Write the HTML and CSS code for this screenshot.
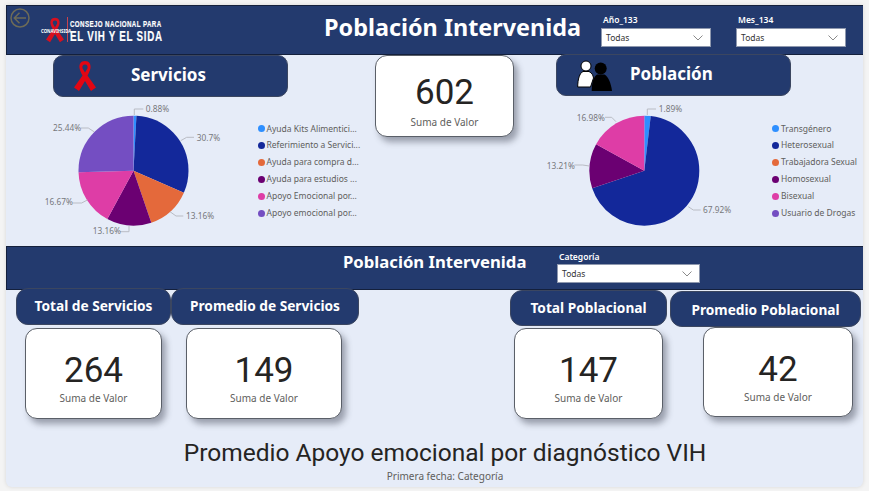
FILE: index.html
```html
<!DOCTYPE html>
<html>
<head>
  <meta charset="utf-8">
  <link rel="stylesheet" href="styles.css">
</head>
<body>
  <div class="canvas">
    <div class="topbar">
      <svg class="back" width="20" height="20" viewBox="0 0 20 20" fill="none" stroke="#6d6b57" stroke-width="1.500">
        <circle cx="10" cy="10" r="9"/>
        <path d="M16 10H4.500M9.500 4.800 4.300 10l5.200 5.200"/>
      </svg>
      <div class="logo">
        <svg width="18" height="26" viewBox="0 0 22 30">
          <path d="M11 0C6.500 0 5 3.500 5.500 7c.4 2.800 2 5.500 3 7.500L0 26.500 5 30l6-10 6 10 5-3.500-8.500-12c1-2 2.600-4.700 3-7.500C17 3.500 15.500 0 11 0zm0 3.500c2 0 3 1.500 2.500 3.800L11 11.500 8.500 7.300C8 5 9 3.500 11 3.500z" fill="#d8101f"/>
        </svg>
        <span class="logo-tag">CONAVIHSIDA</span>
        <div class="logo-name">
          <div class="logo-small">CONSEJO NACIONAL PARA</div>
          <div class="logo-big">EL VIH Y EL SIDA</div>
        </div>
      </div>
      <div class="main-title">Población Intervenida</div>
      <div class="slicer slicer-year">
        <div class="slicer-label">Año_133</div>
        <div class="dropdown">Todas
          <svg width="10" height="6" viewBox="0 0 10 6" fill="none" stroke="#8a8a8a"><path d="M.5.500l4.500 4.500L9.500.500"/></svg>
        </div>
      </div>
      <div class="slicer slicer-month">
        <div class="slicer-label">Mes_134</div>
        <div class="dropdown">Todas
          <svg width="10" height="6" viewBox="0 0 10 6" fill="none" stroke="#8a8a8a"><path d="M.5.500l4.500 4.500L9.500.500"/></svg>
        </div>
      </div>
    </div>

    <div class="charts">
      <div class="panel panel-services">
        <div class="pill pill-head">
          <svg width="22" height="30" viewBox="0 0 22 30">
            <path d="M11 0C6.500 0 5 3.500 5.500 7c.4 2.800 2 5.500 3 7.500L0 26.500 5 30l6-10 6 10 5-3.500-8.500-12c1-2 2.600-4.700 3-7.500C17 3.500 15.500 0 11 0zm0 3.500c2 0 3 1.500 2.500 3.800L11 11.500 8.500 7.300C8 5 9 3.500 11 3.500z" fill="#e30613"/>
          </svg>
          <span>Servicios</span>
        </div>
        <div class="chart-row">
          <svg class="pie" width="226" height="132" viewBox="0 0 226 132">
            <g transform="translate(103.500 55.700) rotate(-90)" fill="none" stroke-width="55">
              <circle r="27.500" pathLength="100" stroke="#2e8fff" stroke-dasharray="0.88 99.120"/>
              <circle r="27.500" pathLength="100" stroke="#13289a" stroke-dasharray="30.700 69.300" stroke-dashoffset="-0.88"/>
              <circle r="27.500" pathLength="100" stroke="#e4693b" stroke-dasharray="13.160 86.840" stroke-dashoffset="-31.580"/>
              <circle r="27.500" pathLength="100" stroke="#6b0072" stroke-dasharray="13.160 86.840" stroke-dashoffset="-44.740"/>
              <circle r="27.500" pathLength="100" stroke="#de3da6" stroke-dasharray="16.670 83.330" stroke-dashoffset="-57.900"/>
              <circle r="27.500" pathLength="100" stroke="#744ec2" stroke-dasharray="25.430 74.570" stroke-dashoffset="-74.570"/>
            </g>
            <g class="leaders">
              <polyline points="104.300,0 104.300,-6 113.300,-6"/>
              <polyline points="150.700,25.700 156.700,22.300 164,22.300"/>
              <polyline points="140,96.700 146,101 153.300,101"/>
              <polyline points="90,116.700 99,116.700 99,111"/>
              <polyline points="42.700,88 51.700,88 57.300,85"/>
              <polyline points="51,13 58.300,13 64,16.700"/>
            </g>
            <text class="pie-label" x="115.700" y="-3">0.88%</text>
            <text class="pie-label" x="166.700" y="25.700">30.7%</text>
            <text class="pie-label" x="156" y="103.700">13.16%</text>
            <text class="pie-label" x="62.700" y="119.300">13.16%</text>
            <text class="pie-label" x="14.700" y="90.300">16.67%</text>
            <text class="pie-label" x="23" y="15.700">25.44%</text>
          </svg>
          <ul class="legend">
            <li><i style="background:#2e8fff"></i>Ayuda Kits Alimentici...</li>
            <li><i style="background:#13289a"></i>Referimiento a Servici...</li>
            <li><i style="background:#e4693b"></i>Ayuda para compra d...</li>
            <li><i style="background:#6b0072"></i>Ayuda para estudios ...</li>
            <li><i style="background:#de3da6"></i>Apoyo Emocional por...</li>
            <li><i style="background:#744ec2"></i>Apoyo emocional por...</li>
          </ul>
        </div>
      </div>

      <div class="card card-center">
        <div class="card-value">602</div>
        <div class="card-label">Suma de Valor</div>
      </div>

      <div class="panel panel-people">
        <div class="pill pill-head pill-people">
          <svg width="36" height="31" viewBox="0 0 36 31">
            <circle cx="9" cy="6" r="5" fill="#fff" stroke="#000"/>
            <path d="M.7 27c0-8 2-14 5.300-15.500h6C15 13 16 15 16.500 18l-3 9z" fill="#fff" stroke="#000"/>
            <circle cx="23.700" cy="8.500" r="6"/>
            <path d="M14.700 31c0-9 2-14 5.300-16.500h7.500C31.500 17 34 23 35 31z"/>
          </svg>
          <span>Población</span>
        </div>
        <div class="chart-row">
          <svg class="pie" width="216" height="132" viewBox="0 0 216 132">
            <g transform="translate(88.300 56.700) rotate(-90)" fill="none" stroke-width="55">
              <circle r="27.500" pathLength="100" stroke="#2e8fff" stroke-dasharray="1.890 98.110"/>
              <circle r="27.500" pathLength="100" stroke="#13289a" stroke-dasharray="67.920 32.080" stroke-dashoffset="-1.890"/>
              <circle r="27.500" pathLength="100" stroke="#6b0072" stroke-dasharray="13.210 86.790" stroke-dashoffset="-69.810"/>
              <circle r="27.500" pathLength="100" stroke="#de3da6" stroke-dasharray="16.980 83.020" stroke-dashoffset="-83.020"/>
            </g>
            <g class="leaders">
              <polyline points="91.300,1 91.300,-5 100,-5"/>
              <polyline points="132.300,92.700 137.300,96 144.700,96"/>
              <polyline points="18.300,51 26.700,51 33.300,52"/>
              <polyline points="49,3.300 55.700,3.300 60,7.700"/>
            </g>
            <text class="pie-label" x="102.700" y="-1.700">1.89%</text>
            <text class="pie-label" x="147" y="99">67.92%</text>
            <text class="pie-label" x="-9.300" y="55">13.21%</text>
            <text class="pie-label" x="20.700" y="7">16.98%</text>
          </svg>
          <ul class="legend">
            <li><i style="background:#2e8fff"></i>Transgénero</li>
            <li><i style="background:#13289a"></i>Heterosexual</li>
            <li><i style="background:#e4693b"></i>Trabajadora Sexual</li>
            <li><i style="background:#6b0072"></i>Homosexual</li>
            <li><i style="background:#de3da6"></i>Bisexual</li>
            <li><i style="background:#744ec2"></i>Usuario de Drogas</li>
          </ul>
        </div>
      </div>
    </div>

    <div class="band">
      <div class="band-title">Población Intervenida</div>
      <div class="slicer slicer-cat">
        <div class="slicer-label">Categoría</div>
        <div class="dropdown">Todas
          <svg width="10" height="6" viewBox="0 0 10 6" fill="none" stroke="#8a8a8a"><path d="M.5.500l4.500 4.500L9.500.500"/></svg>
        </div>
      </div>
    </div>

    <div class="kpis">
      <div class="kpi kpi-total-s">
        <div class="pill pill-kpi">Total de Servicios</div>
        <div class="card">
          <div class="card-value">264</div>
          <div class="card-label">Suma de Valor</div>
        </div>
      </div>
      <div class="kpi kpi-avg-s">
        <div class="pill pill-kpi">Promedio de Servicios</div>
        <div class="card">
          <div class="card-value">149</div>
          <div class="card-label">Suma de Valor</div>
        </div>
      </div>
      <div class="kpi kpi-total-p">
        <div class="pill pill-kpi">Total Poblacional</div>
        <div class="card">
          <div class="card-value">147</div>
          <div class="card-label">Suma de Valor</div>
        </div>
      </div>
      <div class="kpi kpi-avg-p">
        <div class="pill pill-kpi">Promedio Poblacional</div>
        <div class="card">
          <div class="card-value">42</div>
          <div class="card-label">Suma de Valor</div>
        </div>
      </div>
    </div>

    <div class="footer-title">Promedio Apoyo emocional por diagnóstico VIH</div>
    <div class="footer-sub">Primera fecha: Categoría</div>
  </div>
</body>
</html>
```

FILE: styles.css
```css
html, body {
  margin: 0;
  height: 100%;
}

body {
  background: #f4f4f4;
  font-family: "Noto Sans", "Open Sans", sans-serif;
  overflow: hidden;
}

.canvas {
  width: 857px;
  height: 482px;
  margin: 5px 0 0 6px;
  background: #e6ecf8;
  border-radius: 0 0 6px 6px;
  box-shadow: 0 0 4px rgba(0, 0, 0, 0.12);
  display: flex;
  flex-direction: column;
}

/* top header */
.topbar {
  height: 48px;
  flex: none;
  background: #233a6e;
  border: 1px solid #14203c;
  border-width: 1px 0 1px 1px;
  display: flex;
  align-items: flex-start;
  color: #fff;
}

.back {
  margin: 2px 0 0 3px;
  flex: none;
}

.logo {
  flex: none;
  display: flex;
  align-items: flex-start;
  margin: 11px 0 0 16px;
  position: relative;
}

.logo svg {
  flex: none;
  margin-right: 3px;
}

.logo-tag {
  position: absolute;
  left: -5px;
  top: 11px;
  font-size: 4.300px;
  line-height: 6px;
  font-weight: 700;
  color: #fff;
  white-space: nowrap;
}

.logo-name {
  width: 93px;
  height: 24px;
  padding: 1px 0 0 2px;
  box-sizing: content-box;
  border-left: 1px solid #c9434e;
  font-family: "Liberation Sans", sans-serif;
  font-weight: 700;
  white-space: nowrap;
  -webkit-text-stroke: 0.2px #fff;
}

.logo-small {
  font-size: 9.700px;
  line-height: 11px;
  letter-spacing: 0.6px;
  transform: scaleX(0.64);
  transform-origin: left center;
}

.logo-big {
  font-size: 15.300px;
  line-height: 14px;
  letter-spacing: 1.100px;
  transform: scaleX(0.64);
  transform-origin: left center;
}

.main-title {
  flex: none;
  margin: 4px 0 0 161px;
  width: 277px;
  font-size: 23.400px;
  line-height: 34px;
  font-weight: 700;
  white-space: nowrap;
}

.slicer {
  flex: none;
  color: #fff;
}

.slicer-year {
  margin: 7px 0 0 0;
  width: 110px;
}

.slicer-month {
  margin: 7px 0 0 25px;
  width: 110px;
}

.slicer-label {
  font-size: 8.500px;
  line-height: 13px;
  font-weight: 600;
  padding-left: 2px;
}

.dropdown {
  margin-top: 2px;
  height: 19px;
  box-sizing: border-box;
  background: #fff;
  border: 1px solid #8e98ae;
  color: #333;
  font-size: 8.500px;
  line-height: 17px;
  padding: 0 7px 0 4px;
  display: flex;
  align-items: center;
  justify-content: space-between;
}

/* pie section */
.charts {
  height: 191px;
  flex: none;
  display: flex;
  align-items: flex-start;
}

.panel {
  flex: none;
}

.panel-services {
  width: 370px;
}

.panel-people {
  margin-left: 42px;
  width: 307px;
}

.pill {
  background: #233a6e;
  border: 1px solid #3b4660;
  border-radius: 10px;
  color: #fff;
  font-weight: 700;
  box-sizing: border-box;
}

.pill-head {
  width: 235px;
  height: 42px;
  margin-left: 47px;
  display: flex;
  align-items: center;
  font-size: 17px;
}

.pill-head svg {
  margin-left: 20px;
}

.pill-head span {
  margin: -3px 0 0 35px;
}

.pill-people {
  margin-left: 0;
  margin-top: -1px;
}

.pill-people span {
  margin-left: 17px;
}

.chart-row {
  display: flex;
  align-items: flex-start;
  margin-top: 18px;
}

.pie {
  overflow: visible;
  flex: none;
}

.panel-services .pie {
  margin-left: 24px;
}

.leaders polyline {
  fill: none;
  stroke: #b9bcc4;
}

.pie-label {
  font-size: 8.300px;
  fill: #77787c;
}

.legend {
  list-style: none;
  margin: 0;
  padding: 0;
  font-size: 8.500px;
  color: #605e5c;
  white-space: nowrap;
}

.panel-services .legend {
  margin: 5.500px 0 0 1.500px;
}

.panel-people .legend {
  margin: 6.500px 0 0 0;
}

.legend li {
  height: 16.930px;
  line-height: 16.930px;
  display: flex;
  align-items: center;
  gap: 2px;
}

.legend i {
  width: 7px;
  height: 7px;
  border-radius: 50%;
  flex: none;
}

/* white value cards */
.card {
  background: #fff;
  border: 1px solid #5a5f68;
  border-radius: 12px;
  box-sizing: border-box;
  padding-top: 10px;
  box-shadow: 4px 5px 6px rgba(60, 65, 80, 0.45);
  text-align: center;
  display: flex;
  flex-direction: column;
  align-items: center;
  justify-content: center;
}

.card-center {
  flex: none;
  width: 139px;
  height: 82px;
  margin-left: -1px;
}

.card-center .card-label {
  margin-top: 3px;
}

.card-value {
  font-family: "Roboto", sans-serif;
  font-size: 35px;
  line-height: 38px;
  color: #252423;
}

.card-label {
  margin-top: 1px;
  font-size: 10px;
  line-height: 14px;
  color: #605e5c;
}

/* middle band */
.band {
  height: 42px;
  flex: none;
  background: #233a6e;
  border: 1px solid #14203c;
  border-width: 1px 0 1px 1px;
  display: flex;
  align-items: flex-start;
  color: #fff;
}

.band-title {
  flex: none;
  margin: 2px 0 0 336px;
  width: 214px;
  font-size: 16.700px;
  line-height: 26px;
  font-weight: 700;
  white-space: nowrap;
}

.slicer-cat {
  width: 143px;
  margin-top: 3px;
}

.slicer-cat .dropdown {
  margin-top: 1px;
}

/* bottom kpis */
.kpis {
  height: 128px;
  flex: none;
  display: flex;
  align-items: flex-start;
  margin-top: -2px;
}

.kpi {
  flex: none;
  display: flex;
  flex-direction: column;
  align-items: center;
}

.pill-kpi {
  height: 37px;
  border-radius: 12px;
  font-size: 13.700px;
  line-height: 34px;
  text-align: center;
  white-space: nowrap;
}

.kpi .card {
  margin-top: 3px;
  height: 91px;
}

.kpi-total-s {
  margin-left: 10px;
  width: 155px;
}

.kpi-total-s .pill-kpi {
  width: 155px;
}

.kpi-total-s .card {
  width: 137px;
}

.kpi-avg-s {
  width: 188px;
}

.kpi-avg-s .pill-kpi {
  width: 188px;
}

.kpi-avg-s .card {
  width: 156px;
  margin-right: 2px;
}

.kpi-total-p {
  margin-left: 151px;
  width: 157px;
  padding-top: 2px;
}

.kpi-total-p .pill-kpi {
  width: 157px;
  height: 36px;
  line-height: 34px;
}

.kpi-total-p .card {
  width: 149px;
  margin-top: 2px;
}

.kpi-avg-p {
  margin-left: 3px;
  width: 191px;
  padding-top: 3px;
}

.kpi-avg-p .pill-kpi {
  width: 191px;
  height: 36px;
  line-height: 35px;
}

.kpi-avg-p .card {
  width: 150px;
  height: 90px;
  margin-top: 0;
  margin-left: 33px;
  align-self: flex-start;
}

/* footer */
.footer-title {
  font-family: "Roboto", sans-serif;
  margin-top: 22px;
  padding-left: 21px;
  text-align: center;
  font-size: 24.500px;
  line-height: 30px;
  color: #252423;
}

.footer-sub {
  padding-left: 21px;
  text-align: center;
  font-size: 10px;
  line-height: 14px;
  margin-top: 1px;
  color: #605e5c;
}
```
